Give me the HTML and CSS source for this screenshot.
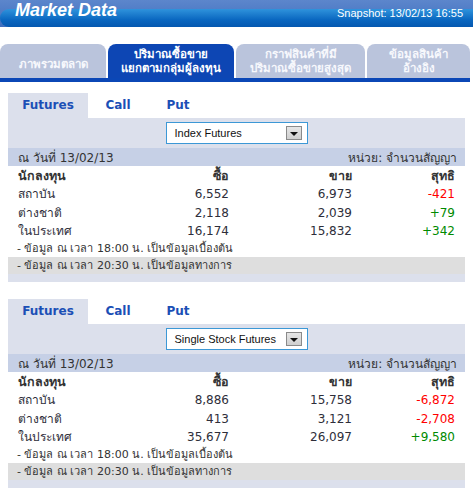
FILE: index.html
```html
<!DOCTYPE html>
<html>
<head>
    <link rel="stylesheet" href="styles.css">
    <meta name="viewport" content="width=device-width, initial-scale=1.0">
    <title>Market Data</title>
</head>
<body>
    <div class="banner">
        <div class="banner-title">Market Data</div>
        <div class="banner-snap">Snapshot: 13/02/13 16:55</div>
    </div>

    <div class="tabs">
        <div class="tab tab1">ภาพรวมตลาด</div>
        <div class="tab tab2 active">ปริมาณซื้อขาย<br>แยกตามกลุ่มผู้ลงทุน</div>
        <div class="tab tab3">กราฟสินค้าที่มี<br>ปริมาณซื้อขายสูงสุด</div>
        <div class="tab tab4">ข้อมูลสินค้า<br>อ้างอิง</div>
    </div>

    <div class="panel">
        <div class="subtabs">
            <div class="subtab wide active">Futures</div>
            <div class="subtab">Call</div>
            <div class="subtab">Put</div>
        </div>
        <div class="picker">
            <div class="select">
                <span>Index Futures</span>
                <span class="drop"><span class="arrow"></span></span>
            </div>
        </div>
        <div class="daterow">
            <span>ณ วันที่ 13/02/13</span>
            <span>หน่วย: จำนวนสัญญา</span>
        </div>
        <div class="grid head">
            <div>นักลงทุน</div><div class="num">ซื้อ</div><div class="num">ขาย</div><div class="num">สุทธิ</div>
        </div>
        <div class="grid">
            <div>สถาบัน</div><div class="num">6,552</div><div class="num">6,973</div><div class="num neg">-421</div>
        </div>
        <div class="grid">
            <div>ต่างชาติ</div><div class="num">2,118</div><div class="num">2,039</div><div class="num pos">+79</div>
        </div>
        <div class="grid">
            <div>ในประเทศ</div><div class="num">16,174</div><div class="num">15,832</div><div class="num pos">+342</div>
        </div>
        <div class="note">- ข้อมูล ณ เวลา 18:00 น. เป็นข้อมูลเบื้องต้น</div>
        <div class="note grey">- ข้อมูล ณ เวลา 20:30 น. เป็นข้อมูลทางการ</div>
        <div class="foot"></div>
    </div>

    <div class="panel">
        <div class="subtabs">
            <div class="subtab wide active">Futures</div>
            <div class="subtab">Call</div>
            <div class="subtab">Put</div>
        </div>
        <div class="picker">
            <div class="select">
                <span>Single Stock Futures</span>
                <span class="drop"><span class="arrow"></span></span>
            </div>
        </div>
        <div class="daterow">
            <span>ณ วันที่ 13/02/13</span>
            <span>หน่วย: จำนวนสัญญา</span>
        </div>
        <div class="grid head">
            <div>นักลงทุน</div><div class="num">ซื้อ</div><div class="num">ขาย</div><div class="num">สุทธิ</div>
        </div>
        <div class="grid">
            <div>สถาบัน</div><div class="num">8,886</div><div class="num">15,758</div><div class="num neg">-6,872</div>
        </div>
        <div class="grid">
            <div>ต่างชาติ</div><div class="num">413</div><div class="num">3,121</div><div class="num neg">-2,708</div>
        </div>
        <div class="grid">
            <div>ในประเทศ</div><div class="num">35,677</div><div class="num">26,097</div><div class="num pos">+9,580</div>
        </div>
        <div class="note">- ข้อมูล ณ เวลา 18:00 น. เป็นข้อมูลเบื้องต้น</div>
        <div class="note grey">- ข้อมูล ณ เวลา 20:30 น. เป็นข้อมูลทางการ</div>
        <div class="foot"></div>
    </div>
</body>
</html>
```

FILE: styles.css
```css
body{
    margin: 0;
    width: 473px;
    font-family: Tahoma, "DejaVu Sans", sans-serif;
    color: #333;
    background: white;
}
.banner{
    position: relative;
    height: 27px;
    background: linear-gradient(#5c86cc, #3f6fbf);
    display: flex;
    justify-content: space-between;
    align-items: flex-end;
    padding: 0 10px 0 15px;
    box-sizing: border-box;
}
.banner::before{
    content: "";
    position: absolute;
    left: 0;
    right: 0;
    top: 9px;
    bottom: 0;
    border-radius: 9px 0 0 9px;
    background: linear-gradient(#2f93dc, #0a67c0 60%, #0558b0);
}
.banner-title{
    position: relative;
    font-family: "Liberation Sans", Arial, sans-serif;
    font-weight: bold;
    font-style: italic;
    font-size: 18px;
    color: white;
    line-height: 20px;
    margin-bottom: 7px;
}
.banner-snap{
    position: relative;
    font-family: "Liberation Sans", Arial, sans-serif;
    font-size: 11px;
    color: white;
    line-height: 12px;
    margin-bottom: 8px;
}
.tabs{
    display: flex;
    gap: 2px;
    width: 470px;
    margin-top: 17px;
    border-bottom: 4px solid #0b47b6;
}
.tab{
    height: 34px;
    border-radius: 8px 8px 0 0;
    background: #bac4dc;
    color: #f7f8fc;
    font-size: 11.5px;
    font-weight: bold;
    line-height: 14px;
    display: flex;
    align-items: center;
    justify-content: center;
    text-align: center;
    white-space: nowrap;
}
.tab1{ width: 106px; padding-top: 6px; box-sizing: border-box; }
.tab2{ width: 126px; }
.tab3{ width: 129px; }
.tab4{ width: 103px; }
.tab.active{
    background: #0d46b4;
    color: white;
}
.panel{
    width: 457px;
    margin: 11px 0 0 8px;
}
.panel + .panel{
    margin-top: 17.5px;
}
.subtabs{
    display: flex;
    height: 25px;
}
.subtab{
    width: 60px;
    text-align: center;
    line-height: 25px;
    font-size: 12px;
    font-weight: bold;
    color: #1b4fb6;
}
.subtab.wide{
    width: 80px;
}
.subtab.active{
    background: #dce0ec;
}
.picker{
    height: 30px;
    background: #dce0ec;
    display: flex;
    align-items: center;
    justify-content: center;
}
.select{
    width: 142px;
    height: 22px;
    box-sizing: border-box;
    border: 1px solid #3c98d6;
    background: white;
    display: flex;
    align-items: center;
    justify-content: space-between;
    padding: 0 5px 0 8px;
    font-family: "Liberation Sans", Arial, sans-serif;
    font-size: 11px;
    color: #111;
    white-space: nowrap;
}
.drop{
    width: 16px;
    height: 14px;
    box-sizing: border-box;
    border: 1px solid #8a8a8a;
    background: linear-gradient(#e6e6e6, #cfcfcf);
    display: flex;
    align-items: center;
    justify-content: center;
}
.arrow{
    width: 0;
    height: 0;
    border-left: 4px solid transparent;
    border-right: 4px solid transparent;
    border-top: 4px solid #111;
    margin-top: 2px;
}
.daterow{
    height: 18px;
    background: #c6d0e6;
    display: flex;
    justify-content: space-between;
    align-items: center;
    padding: 0 8px 0 10px;
    font-size: 12px;
    color: #333;
}
.grid{
    display: grid;
    grid-template-columns: 111px 100px 123px 103px;
    padding: 0 10px;
    height: 18.5px;
    line-height: 18.5px;
    font-size: 12px;
    color: #2e2e3a;
}
.grid.head{
    height: 19px;
    line-height: 19px;
    font-size: 12.5px;
    font-weight: bold;
    color: #333;
}
.num{
    text-align: right;
}
.neg{
    color: #ff0000;
}
.pos{
    color: #008a00;
}
.note{
    height: 16px;
    line-height: 16px;
    font-size: 11px;
    padding-left: 9px;
    color: #333;
    white-space: nowrap;
}
.note.grey{
    height: 17px;
    line-height: 17px;
    background: #dedede;
}
.foot{
    height: 8px;
    background: #dce0ec;
}
```
